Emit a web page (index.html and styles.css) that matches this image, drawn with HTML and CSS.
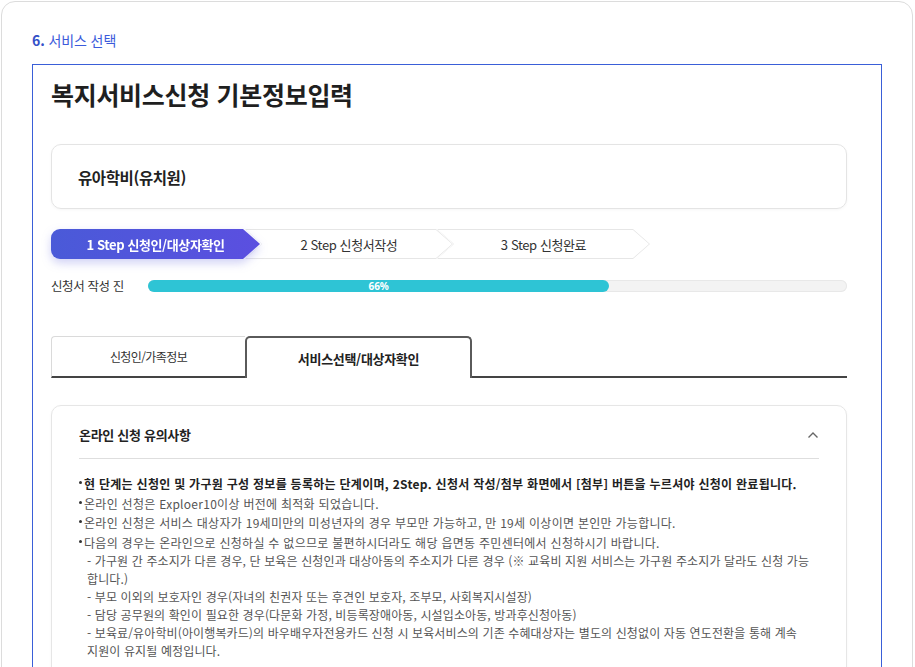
FILE: index.html
```html
<!DOCTYPE html>
<html lang="ko">
<head>
<meta charset="utf-8">
<title>서비스 선택</title>
<link rel="stylesheet" href="styles.css">
</head>
<body>
<div class="card">
  <h2 class="sec-title"><b>6.</b> 서비스 선택</h2>
  <div class="frame">
    <h1 class="page-title">복지서비스신청 기본정보입력</h1>
    <div class="service-box">유아학비(유치원)</div>

    <div class="steps">
      <div class="step step-1"><div class="step-shape">1 Step 신청인/대상자확인</div></div>
      <div class="step step-2"><div class="step-shape"><span>2 Step 신청서작성</span></div></div>
      <div class="step step-3"><div class="step-shape"><span>3 Step 신청완료</span></div></div>
    </div>

    <div class="progress-row">
      <span class="progress-label">신청서 작성 진</span>
      <div class="progress-track"><div class="progress-fill" style="width:66%">66%</div></div>
    </div>

    <div class="tabs">
      <div class="tab">신청인/가족정보</div>
      <div class="tab active">서비스선택/대상자확인</div>
      <div class="tab-rest"></div>
    </div>

    <div class="notice">
      <div class="notice-head">
        <span>온라인 신청 유의사항</span>
        <svg class="chev" width="12" height="8" viewBox="0 0 12 8"><path d="M1.5 6.5 L6 2 L10.5 6.5" fill="none" stroke="#666" stroke-width="1.4"/></svg>
      </div>
      <div class="notice-body">
        <p class="bullet strong">현 단계는 신청인 및 가구원 구성 정보를 등록하는 단계이며, 2Step. 신청서 작성/첨부 화면에서 [첨부] 버튼을 누르셔야 신청이 완료됩니다.</p>
        <p class="bullet">온라인 선청은 Exploer10이상 버전에 최적화 되었습니다.</p>
        <p class="bullet">온라인 신청은 서비스 대상자가 19세미만의 미성년자의 경우 부모만 가능하고, 만 19세 이상이면 본인만 가능합니다.</p>
        <p class="bullet">다음의 경우는 온라인으로 신청하실 수 없으므로 불편하시더라도 해당 읍면동 주민센터에서 신청하시기 바랍니다.</p>
        <p class="sub">- 가구원 간 주소지가 다른 경우, 단 보육은 신청인과 대상아동의 주소지가 다른 경우 (※ 교육비 지원 서비스는 가구원 주소지가 달라도 신청 가능<br>합니다.)</p>
        <p class="sub">- 부모 이외의 보호자인 경우(자녀의 친권자 또는 후견인 보호자, 조부모, 사회복지시설장)</p>
        <p class="sub">- 담당 공무원의 확인이 필요한 경우(다문화 가정, 비등록장애아동, 시설입소아동, 방과후신청아동)</p>
        <p class="sub">- 보육료/유아학비(아이행복카드)의 바우배우자전용카드 신청 시 보육서비스의 기존 수혜대상자는 별도의 신청없이 자동 연도전환을 통해 계속<br>지원이 유지될 예정입니다.</p>
      </div>
    </div>
  </div>
</div>
</body>
</html>
```

FILE: styles.css
```css
html, body {
  margin: 0;
  padding: 0;
  overflow: hidden;
  background: #fff;
}
body {
  font-family: "Noto Sans CJK KR", "Noto Sans", sans-serif;
  color: #222;
}
.card {
  margin: 1px 2px 0 1px;
  border: 1px solid #dcdcdc;
  border-radius: 14px;
  padding: 27px 30px 40px;
  min-height: 900px;
}
.sec-title {
  margin: 0;
  font-size: 14px;
  line-height: 22px;
  font-weight: 400;
  color: #3b5bdb;
  letter-spacing: -0.1px;
}
.sec-title b {
  font-weight: 700;
  color: #3450c8;
}
.frame {
  margin-top: 13px;
  border: 1px solid #3a5fd8;
  padding: 11px 34px 20px 18px;
}
.page-title {
  margin: 0;
  font-size: 25px;
  line-height: 36px;
  font-weight: 700;
  color: #1f1f1f;
  letter-spacing: -0.3px;
}
.service-box {
  margin-top: 32px;
  height: 63px;
  border: 1px solid #e4e4e4;
  border-radius: 10px;
  padding-left: 26px;
  display: flex;
  align-items: center;
  font-size: 15.5px;
  font-weight: 700;
  color: #222;
  letter-spacing: -0.4px;
  box-shadow: 0 1px 3px rgba(0,0,0,0.04);
}
.steps {
  margin-top: 20px;
  display: flex;
  height: 30px;
}
.step {
  position: relative;
  height: 30px;
}
.step-shape {
  height: 100%;
  display: flex;
  align-items: center;
  justify-content: center;
  font-size: 13px;
  letter-spacing: -0.4px;
  color: #333;
}
.step-1 {
  width: 209px;
  z-index: 3;
  filter: drop-shadow(0 4px 5px rgba(85, 90, 220, 0.28));
}
.step-1 .step-shape {
  background: linear-gradient(90deg, #4a5ad8, #5b4fe0);
  color: #fff;
  font-weight: 700;
  border-radius: 9px 0 0 9px;
  clip-path: polygon(0 0, calc(100% - 17px) 0, 100% 50%, calc(100% - 17px) 100%, 0 100%);
}
.step-2 .step-shape, .step-3 .step-shape {
  position: relative;
  background: #e6e6e6;
  clip-path: polygon(0 0, calc(100% - 17px) 0, 100% 50%, calc(100% - 17px) 100%, 0 100%, 17px 50%);
}
.step-2 .step-shape::before, .step-3 .step-shape::before {
  content: "";
  position: absolute;
  inset: 1px;
  background: #fff;
  clip-path: polygon(0 0, calc(100% - 16px) 0, 100% 50%, calc(100% - 16px) 100%, 0 100%, 16px 50%);
}
.step-shape span {
  position: relative;
}
.step-2 {
  width: 208px;
  margin-left: -15px;
  z-index: 2;
}
.step-3 {
  width: 213px;
  margin-left: -16px;
  z-index: 1;
}
.progress-row {
  margin-top: 20px;
  display: flex;
  align-items: center;
  height: 14px;
}
.progress-label {
  width: 97px;
  flex: none;
  font-size: 12.5px;
  color: #333;
  letter-spacing: -0.4px;
  line-height: 14px;
}
.progress-track {
  flex: 1;
  height: 12px;
  border-radius: 6px;
  background: #f3f3f3;
  box-shadow: inset 0 0 0 1px #e8e8e8;
}
.progress-fill {
  height: 100%;
  border-radius: 6px;
  background: #2ec4d5;
  color: #fff;
  font-family: "Noto Sans", sans-serif;
  font-size: 10px;
  font-weight: 700;
  line-height: 12px;
  text-align: center;
}
.tabs {
  margin-top: 43px;
  display: flex;
  height: 42px;
}
.tab {
  display: flex;
  align-items: center;
  justify-content: center;
  font-size: 13px;
  color: #333;
  letter-spacing: -0.3px;
  box-sizing: border-box;
}
.tab:first-child {
  width: 194px;
  border: 1px solid #dadada;
  border-bottom: 2px solid #444;
  border-right: none;
  border-radius: 4px 0 0 0;
  font-size: 12px;
  letter-spacing: -0.6px;
}
.tab.active {
  width: 227px;
  border: 2px solid #5a5a5a;
  border-bottom: none;
  border-radius: 5px 5px 0 0;
  font-weight: 700;
  color: #222;
}
.tab-rest {
  flex: 1;
  border-bottom: 2px solid #444;
}
.notice {
  margin-top: 27px;
  border: 1px solid #e6e6e6;
  border-radius: 10px;
  padding: 0 27px 20px;
  box-shadow: 0 1px 3px rgba(0,0,0,0.04);
}
.notice-head {
  display: flex;
  align-items: center;
  justify-content: space-between;
  padding: 17px 0 11px;
  border-bottom: 1px solid #dedede;
  font-size: 13px;
  font-weight: 700;
  line-height: 24px;
  letter-spacing: -0.3px;
  color: #222;
}
.chev {
  display: block;
}
.notice-body {
  padding-top: 15px;
  font-size: 12px;
  color: #555;
  letter-spacing: 0.28px;
}
.notice-body p {
  margin: 0;
}
.bullet {
  line-height: 19.5px;
  position: relative;
  padding-left: 5px;
}
.bullet::before {
  content: "";
  position: absolute;
  left: 0;
  top: 7px;
  width: 3px;
  height: 3px;
  border-radius: 50%;
  background: #333;
}
.bullet.strong {
  font-weight: 700;
  color: #222;
  letter-spacing: 0.28px;
}
.sub {
  line-height: 18px;
  margin-top: 3px;
  padding-left: 8px;
  letter-spacing: 0.12px;
}
```
